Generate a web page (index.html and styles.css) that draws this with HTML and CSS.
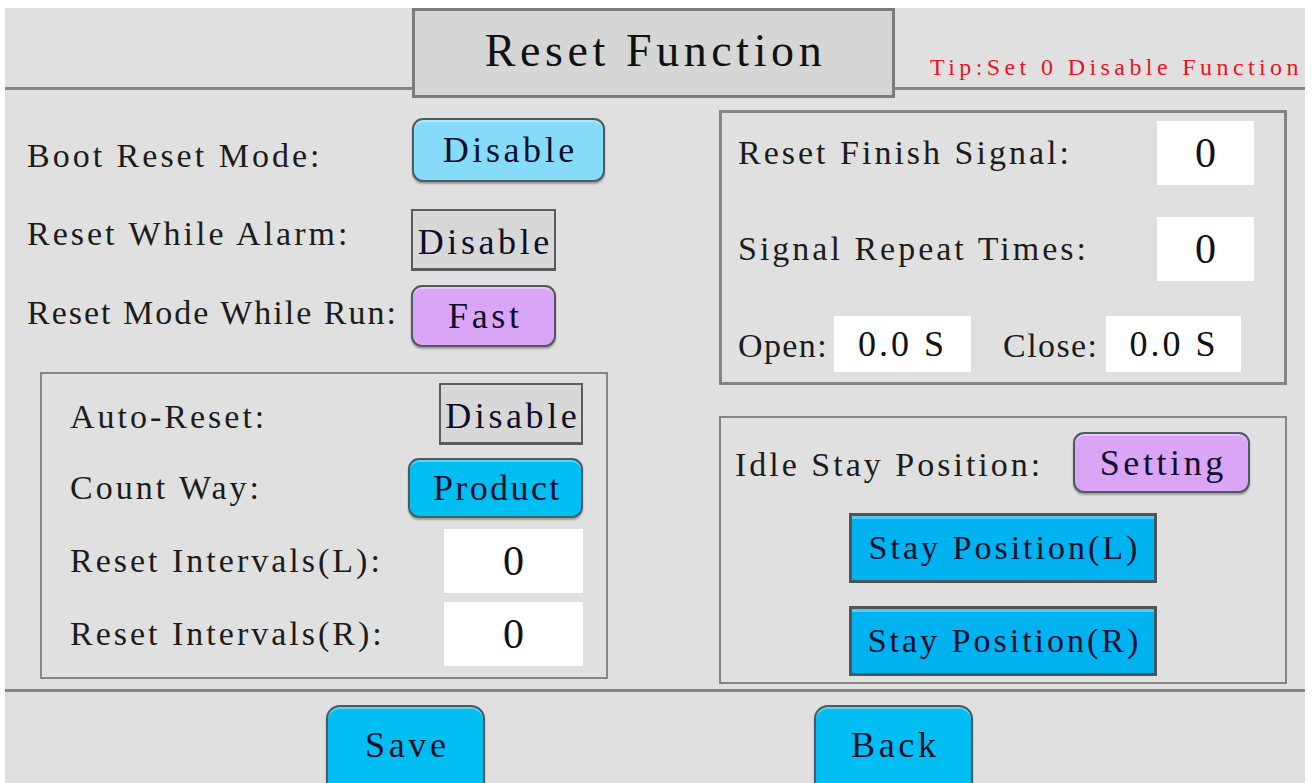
FILE: index.html
```html
<!DOCTYPE html>
<html lang="en">
<head>
    <meta charset="UTF-8">
    <meta name="viewport" content="width=device-width, initial-scale=1.0">
    <title>Reset Function</title>
    <link rel="stylesheet" href="styles.css">
</head>
<body>
<div class="screen">
    <div class="head">
        <div class="head-side"></div>
        <div class="title-box">Reset Function</div>
        <div class="head-tip"><span class="tip">Tip:Set 0 Disable Function</span></div>
    </div>

    <div class="main">
        <div class="col-left">
            <div class="row row-boot">
                <span class="label">Boot Reset Mode:</span>
                <button class="btn btn-round btn-light w-boot">Disable</button>
            </div>
            <div class="row row-alarm">
                <span class="label">Reset While Alarm:</span>
                <button class="btn btn-flat w-alarm">Disable</button>
            </div>
            <div class="row row-run">
                <span class="label">Reset Mode While Run:</span>
                <button class="btn btn-round btn-purple w-alarm">Fast</button>
            </div>

            <div class="panel panel-auto">
                <div class="prow prow-auto">
                    <span class="label">Auto-Reset:</span>
                    <button class="btn btn-flat w-auto">Disable</button>
                </div>
                <div class="prow prow-count">
                    <span class="label">Count Way:</span>
                    <button class="btn btn-round btn-blue w-count">Product</button>
                </div>
                <div class="prow prow-int">
                    <span class="label">Reset Intervals(L):</span>
                    <span class="value w-int">0</span>
                </div>
                <div class="prow prow-int2">
                    <span class="label">Reset Intervals(R):</span>
                    <span class="value w-int">0</span>
                </div>
            </div>
        </div>

        <div class="col-right">
            <div class="panel panel-signal">
                <div class="srow srow-finish">
                    <span class="label">Reset Finish Signal:</span>
                    <span class="value w-sig">0</span>
                </div>
                <div class="srow srow-repeat">
                    <span class="label">Signal Repeat Times:</span>
                    <span class="value w-sig">0</span>
                </div>
                <div class="srow srow-time">
                    <span class="label">Open:</span>
                    <span class="value value-time w-open">0.0 S</span>
                    <span class="label label-close">Close:</span>
                    <span class="value value-time w-close">0.0 S</span>
                </div>
            </div>

            <div class="panel panel-idle">
                <div class="irow">
                    <span class="label">Idle Stay Position:</span>
                    <button class="btn btn-round btn-purple w-setting">Setting</button>
                </div>
                <button class="btn btn-stay">Stay Position(L)</button>
                <button class="btn btn-stay btn-stay-r">Stay Position(R)</button>
            </div>
        </div>
    </div>

    <div class="foot">
        <button class="btn btn-round btn-blue btn-foot">Save</button>
        <button class="btn btn-round btn-blue btn-foot">Back</button>
    </div>
</div>
</body>
</html>
```

FILE: styles.css
```css
body {
    margin: 0;
    background: #fff;
    font-family: "Liberation Serif", "DejaVu Serif", serif;
    color: #1a1a1a;
}
.screen {
    width: 1300px;
    height: 775px;
    margin: 8px 0 0 5px;
    background: #e0e0e0;
    overflow: hidden;
    display: flex;
    flex-direction: column;
}
button {
    font-family: inherit;
    padding: 0;
    cursor: pointer;
}

/* header */
.head {
    display: flex;
    height: 90px;
    flex: none;
}
.head-side {
    width: 407px;
    height: 82px;
    box-sizing: border-box;
    border-bottom: 3px solid #858585;
}
.title-box {
    width: 483px;
    height: 90px;
    box-sizing: border-box;
    border: 3px solid #7c7c7c;
    background: #d6d6d6;
    font-size: 46px;
    letter-spacing: 4.6px;
    display: flex;
    align-items: center;
    justify-content: center;
    padding: 0 0 6px 4px;
    color: #111;
}
.head-tip {
    flex: 1;
    height: 82px;
    box-sizing: border-box;
    border-bottom: 3px solid #858585;
    display: flex;
    align-items: flex-end;
    padding: 0 0 6px 35px;
}
.tip {
    color: #e8141e;
    font-size: 24px;
    letter-spacing: 4.4px;
    white-space: nowrap;
}

/* body */
.main {
    display: flex;
    height: 591px;
    flex: none;
}
.col-left {
    width: 714px;
    padding-left: 22px;
    box-sizing: border-box;
}
.col-right {
    width: 568px;
}
.label {
    font-size: 34px;
    letter-spacing: 3px;
    color: #1c1c1c;
    white-space: nowrap;
}
.row {
    display: flex;
    align-items: center;
}
.row .label {
    width: 384px;
    flex: none;
}
.row-boot { margin-top: 20px; }
.row-boot .label { padding-top: 12px; }
.row-alarm { margin-top: 27px; }
.row-alarm .label { padding-bottom: 12px; }
.row-run { margin-top: 14px; }
.row-run .label { padding-bottom: 6px; letter-spacing: 2px; }

.btn {
    font-size: 36px;
    letter-spacing: 3.6px;
    padding-left: 3.6px;
    color: #0d0d2c;
    box-sizing: border-box;
    display: flex;
    align-items: center;
    justify-content: center;
}
.btn-round {
    border: 2px solid #4d5a60;
    border-radius: 11px;
    box-shadow: 0 2px 2px rgba(0, 0, 0, 0.3), inset 0 2px 0 rgba(255, 255, 255, 0.35);
}
.btn-light { background: #86dcf8; }
.btn-blue { background: #00bef2; }
.btn-purple { background: #dba5f6; }
.btn-flat {
    background: #d8d8d8;
    border: 2px solid #5c5c5c;
    border-bottom-width: 3px;
    border-radius: 0;
    padding-top: 4px;
}
.w-boot { width: 193px; height: 64px; margin-left: 1px; }
.w-alarm { width: 145px; height: 62px; }

.panel {
    border: 2px solid #858585;
    box-sizing: border-box;
}
.panel-auto {
    width: 568px;
    height: 307px;
    margin: 25px 0 0 13px;
    padding: 9px 23px 0 28px;
}
.prow {
    display: flex;
    align-items: center;
    justify-content: space-between;
}
.w-auto { width: 144px; height: 62px; }
.w-count { width: 175px; height: 60px; letter-spacing: 2.4px; }
.prow-count { margin-top: 13px; }
.prow-int { margin-top: 11px; }
.prow-int2 { margin-top: 9px; }
.prow-auto .label { padding-top: 6px; }

.value {
    background: #fff;
    display: flex;
    align-items: center;
    justify-content: center;
    font-size: 42px;
    color: #111;
    box-sizing: border-box;
}
.w-int { width: 139px; height: 64px; }

/* right side */
.panel-signal {
    width: 568px;
    height: 275px;
    margin-top: 12px;
    border-width: 3px;
    padding: 8px 30px 0 16px;
}
.srow {
    display: flex;
    align-items: center;
    justify-content: space-between;
}
.w-sig { width: 97px; height: 64px; }
.srow-repeat { margin-top: 32px; }
.srow-time {
    margin-top: 35px;
    justify-content: flex-start;
}
.srow-time .label { font-size: 34px; letter-spacing: 1.4px; padding-top: 4px; }
.value-time {
    font-size: 36px;
    letter-spacing: 3px;
    height: 56px;
}
.w-open { width: 137px; margin-left: 6px; }
.label-close { margin-left: 32px; }
.w-close { width: 135px; margin-left: 8px; }

.panel-idle {
    width: 568px;
    height: 268px;
    margin-top: 31px;
    padding: 14px 0 0 14px;
    display: flex;
    flex-direction: column;
    align-items: center;
}
.irow {
    display: flex;
    align-items: center;
    align-self: stretch;
}
.irow .label { padding-top: 4px; }
.w-setting { width: 177px; height: 61px; margin: 0 35px 0 auto; }
.btn-stay {
    width: 308px;
    height: 70px;
    margin: 20px 14px 0 0;
    background: #00b2f0;
    border: 3px solid #4e5558;
    box-shadow: inset 0 3px 0 rgba(255, 255, 255, 0.3);
    font-size: 34px;
    letter-spacing: 3px;
    padding-left: 3px;
}
.btn-stay-r { margin-top: 23px; }

/* footer */
.foot {
    border-top: 3px solid #858585;
    display: flex;
    padding: 13px 0 0 321px;
    gap: 329px;
    flex: none;
}
.btn-foot {
    width: 159px;
    height: 95px;
    font-size: 36px;
    padding-bottom: 16px;
    border-radius: 14px;
}
```
